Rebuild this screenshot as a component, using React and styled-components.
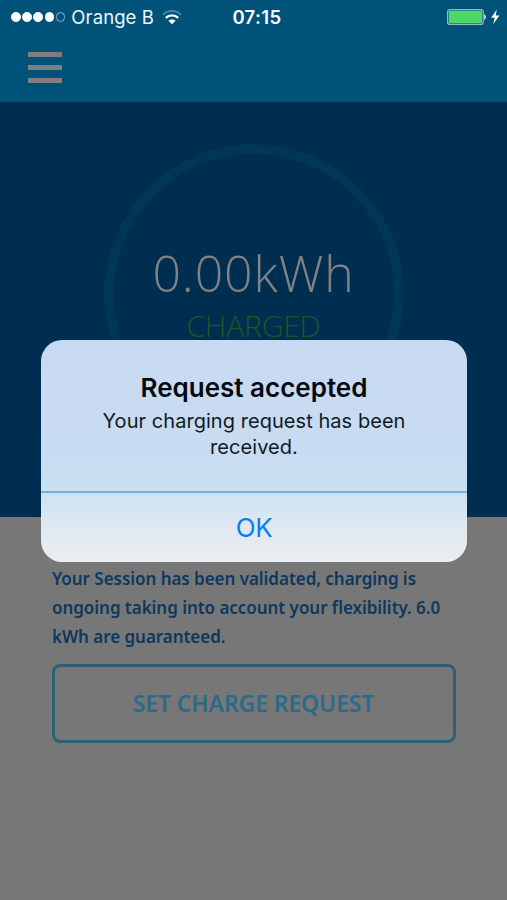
import React, {useState, useCallback} from 'react';
import styled, {createGlobalStyle} from 'styled-components';

const App = () => {
	const [isOpened, setIsOpened] = useState(true);

	const onClickCloseAlert = useCallback(() => {
		setIsOpened(false);
	}, []);

	return (
		<Screen>
			<GlobalStyle />
			<TopBar>
				<StatusBar>
					<Carrier>
						<Signal>
							<Dot $filled />
							<Dot $filled />
							<Dot $filled />
							<Dot $filled />
							<Dot />
						</Signal>
						<CarrierName>Orange B</CarrierName>
						<WifiIcon />
					</Carrier>
					<Clock>07:15</Clock>
					<Power>
						<BatteryIcon />
					</Power>
				</StatusBar>
				<MenuButton aria-label={'menu'}>
					<MenuLine />
					<MenuLine />
					<MenuLine />
				</MenuButton>
			</TopBar>
			<Hero>
				<Ring>
					<Energy>0.00kWh</Energy>
					<Status>CHARGED</Status>
				</Ring>
			</Hero>
			<Content>
				<Message>
					<div>Your Session has been validated, charging is</div>
					<div>ongoing taking into account your flexibility. 6.0</div>
					<div>kWh are guaranteed.</div>
				</Message>
				<RequestButton>SET CHARGE REQUEST</RequestButton>
			</Content>
			{isOpened && (
				<Alert>
					<AlertBody>
						<AlertTitle>Request accepted</AlertTitle>
						<AlertText>
							Your charging request has been
							<br />
							received.
						</AlertText>
					</AlertBody>
					<AlertButton onClick={onClickCloseAlert}>OK</AlertButton>
				</Alert>
			)}
		</Screen>
	);
};

export default App;

const WifiIcon = () => (
	<svg width="20" height="15" viewBox="0 0 20 15" fill="none">
		<path d="M1 4.6C6 -0.2 14 -0.2 19 4.6" stroke="#4a88a8" strokeWidth="1.9" />
		<path d="M3.8 7.9C7.2 4.5 12.8 4.5 16.2 7.9" stroke="#fff" strokeWidth="2.2" />
		<path d="M6.4 10.8C8.4 8.9 11.6 8.9 13.6 10.8L10 14.2Z" fill="#fff" />
	</svg>
);

const BatteryIcon = () => (
	<svg width="54" height="18" viewBox="0 0 54 18" fill="none">
		<rect x="0.6" y="1.6" width="35.6" height="14.8" rx="2.2" stroke="#8fbccb" strokeWidth="1.2" />
		<rect x="1.8" y="2.8" width="33.2" height="12.4" rx="0.6" fill="#4cd964" />
		<path d="M37.2 6.2C39.4 6.6 39.4 11.4 37.2 11.8Z" fill="#dcebf2" />
		<path d="M49.8 1.6L44.2 9.8H47.7L46.2 16.2L52.4 7.6H48.7Z" fill="#fff" />
	</svg>
);

const GlobalStyle = createGlobalStyle`
	body {
		margin: 0;
		background: #777;
	}
	* {
		box-sizing: border-box;
	}
`;

const Screen = styled.div`
	position: relative;
	width: 507px;
	height: 900px;
	overflow: hidden;
	display: flex;
	flex-direction: column;
	background: #777;
	font-family: 'Inter', sans-serif;
`;

const TopBar = styled.header`
	height: 102px;
	background: #005279;
`;

const StatusBar = styled.div`
	display: grid;
	grid-template-columns: 1fr auto 1fr;
	align-items: center;
	height: 34px;
	padding: 0 6px 0 11px;
	color: #fff;
`;

const Carrier = styled.div`
	display: flex;
	align-items: center;
`;

const Signal = styled.div`
	display: flex;
	gap: 1.6px;
	margin-right: 6px;
`;

const Dot = styled.i`
	width: 9.6px;
	height: 9.6px;
	border-radius: 50%;
	border: 1.2px solid ${({$filled}) => ($filled ? '#fff' : '#8cb4c8')};
	background: ${({$filled}) => ($filled ? '#fff' : 'transparent')};
`;

const CarrierName = styled.span`
	margin-right: 8px;
	font-size: 18.5px;
	letter-spacing: 0.1px;
	color: #eef6fa;
`;

const Clock = styled.span`
	margin-left: 2px;
	font-size: 18.5px;
	font-weight: 600;
	letter-spacing: 0.4px;
`;

const Power = styled.div`
	display: flex;
	justify-content: flex-end;
`;

const MenuButton = styled.button`
	display: flex;
	flex-direction: column;
	gap: 8px;
	margin: 18px 0 0 28px;
	padding: 0;
	border: none;
	background: none;
`;

const MenuLine = styled.span`
	width: 34px;
	height: 5px;
	background: #7f7f7f;
`;

const Hero = styled.section`
	display: flex;
	justify-content: center;
	height: 415px;
	padding-top: 42px;
	background: #002e50;
`;

const Ring = styled.div`
	display: flex;
	flex-direction: column;
	align-items: center;
	width: 300px;
	height: 300px;
	padding-top: 89px;
	border: 10px solid #003656;
	border-radius: 50%;
	font-family: 'Open Sans', sans-serif;
	font-weight: 300;
	white-space: nowrap;
`;

const Energy = styled.div`
	font-size: 50px;
	font-weight: 345;
	line-height: 60px;
	letter-spacing: 0.9px;
	color: #808386;
`;

const Status = styled.div`
	font-size: 30px;
	font-weight: 330;
	line-height: 45px;
	letter-spacing: -0.2px;
	color: #20561f;
`;

const Content = styled.section`
	display: flex;
	flex-direction: column;
	padding: 48px 51px 0 52px;
`;

const Message = styled.div`
	font-family: 'Noto Sans', sans-serif;
	font-size: 17px;
	font-weight: 600;
	line-height: 28.9px;
	letter-spacing: -0.04px;
	color: #0e375d;
	white-space: nowrap;
`;

const RequestButton = styled.button`
	height: 79px;
	margin-top: 12.3px;
	padding: 0 1px 1px 0;
	border: 3px solid #2b6077;
	border-radius: 8px;
	background: none;
	font-family: 'Noto Sans', sans-serif;
	font-size: 23px;
	font-weight: 600;
	letter-spacing: -0.12px;
	color: #2b6a89;
	white-space: nowrap;
`;

const Alert = styled.div`
	position: absolute;
	top: 340px;
	left: 41px;
	display: flex;
	flex-direction: column;
	width: 426px;
	height: 222px;
	border-radius: 21px;
	background: linear-gradient(#c7daf1 0%, #c7dbf1 50%, #c9e0f1 66%, #d3e5f0 74%, #e2eaf0 88%, #eaeef3 100%);
	overflow: hidden;
	text-align: center;
`;

const AlertBody = styled.div`
	height: 153px;
	padding-top: 31px;
	border-bottom: 2px solid #76b0dc;
`;

const AlertTitle = styled.div`
	font-size: 26px;
	font-weight: 600;
	line-height: 34px;
	color: #05080c;
`;

const AlertText = styled.div`
	margin-top: 4px;
	font-size: 20px;
	line-height: 25.5px;
	letter-spacing: 0.05px;
	color: #111a24;
`;

const AlertButton = styled.button`
	flex: 1;
	padding: 0;
	border: none;
	background: none;
	font-family: inherit;
	font-size: 26px;
	letter-spacing: -0.5px;
	color: #0b7bf7;
`;
